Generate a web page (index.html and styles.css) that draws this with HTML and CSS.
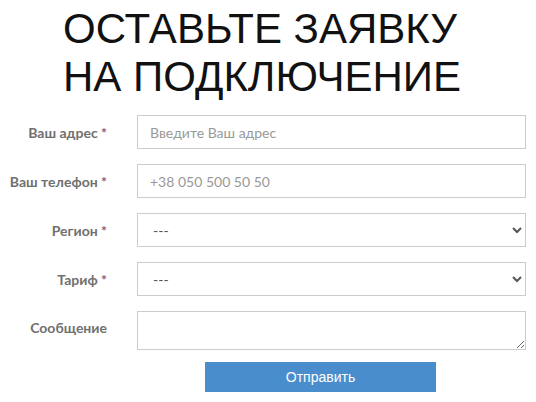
FILE: index.html
```html
<!DOCTYPE html>
<html lang="ru">
<head>
    <meta charset="UTF-8">
    <meta name="viewport" content="width=device-width, initial-scale=1.0">
    <title>Оставьте заявку на подключение</title>
    <link rel="stylesheet" href="styles.css">
</head>
<body>
    <section class="request">
        <h1 class="request-title">ОСТАВЬТЕ ЗАЯВКУ<br>НА ПОДКЛЮЧЕНИЕ</h1>
        <form class="request-form">
            <label class="form-label" for="address">Ваш адрес <span class="req">*</span></label>
            <input class="form-control" id="address" type="text" placeholder="Введите Ваш адрес">

            <label class="form-label" for="phone">Ваш телефон <span class="req">*</span></label>
            <input class="form-control" id="phone" type="text" placeholder="+38 050 500 50 50">

            <label class="form-label" for="region">Регион <span class="req">*</span></label>
            <select class="form-control" id="region">
                <option>---</option>
            </select>

            <label class="form-label" for="tariff">Тариф <span class="req">*</span></label>
            <select class="form-control" id="tariff">
                <option>---</option>
            </select>

            <label class="form-label form-label-top" for="message">Сообщение</label>
            <textarea class="form-control form-textarea" id="message"></textarea>

            <button class="submit-btn" type="submit">Отправить</button>
        </form>
    </section>
</body>
</html>
```

FILE: styles.css
```css
body {
    margin: 0;
    padding: 0;
    background: #fff;
    font-family: Lato, "Open Sans", sans-serif;
}

.request {
    padding: 5px 10px 0 0;
}

.request-title {
    margin: 0 0 14px 0;
    padding-left: 63px;
    font-family: "Liberation Sans", Arial, sans-serif;
    font-weight: normal;
    font-size: 42px;
    line-height: 48px;
    color: #111;
}

.request-form {
    display: grid;
    grid-template-columns: 107px 1fr;
    column-gap: 30px;
    row-gap: 15px;
    align-items: center;
}

.form-label {
    text-align: right;
    font-size: 14px;
    font-weight: bold;
    color: #707070;
}

.form-label-top {
    align-self: start;
    padding-top: 8px;
}

.req {
    color: #a05555;
}

.form-control {
    box-sizing: border-box;
    width: 100%;
    height: 34px;
    margin: 0;
    padding: 0 12px;
    border: 1px solid #ccc;
    border-radius: 0;
    background: #fff;
    font-family: Lato, "Open Sans", sans-serif;
    font-size: 14px;
    color: #555;
}

.form-control::placeholder {
    color: #999;
}

select.form-control {
    padding-left: 11px;
}

.form-textarea {
    height: 39px;
    padding: 6px 12px;
    resize: vertical;
}

.submit-btn {
    grid-column: 2;
    justify-self: start;
    width: 231px;
    height: 30px;
    margin: -3px 0 0 68px;
    border: none;
    background-color: #4a8dcc;
    color: #fff;
    font-family: "Liberation Sans", Arial, sans-serif;
    font-size: 14px;
    cursor: pointer;
}
```
